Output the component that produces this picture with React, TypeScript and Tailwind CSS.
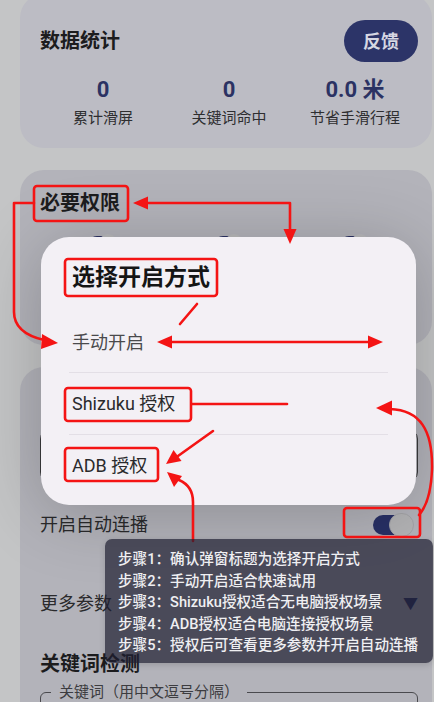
import React from "react";

const RED = "#f41414";

function Annotations() {
  return (
    <svg
      className="absolute inset-0 pointer-events-none"
      width={434}
      height={702}
      viewBox="0 0 434 702"
      fill="none"
    >
      <g stroke={RED} strokeWidth={2.6} strokeLinecap="round" strokeLinejoin="round">
        <rect x={34} y={186} width={94} height={35} rx={3} />
        <rect x={65} y={259} width={152} height={37} rx={3} />
        <rect x={65} y={388} width={126} height={33} rx={3} />
        <rect x={65} y={448} width={93} height={33} rx={3} />
        <rect x={344} y={508} width={76} height={29} rx={3} />
        <path d="M145 203 H290 V231" />
        <path d="M34 203 H14 V312 Q14 333 44 340" />
        <path d="M197 304 L180 324" />
        <path d="M170 342 H370" />
        <path d="M192 404 H287" />
        <path d="M213 431 L178 456" />
        <path d="M193 541 V502 Q193 486 179 480" />
        <path d="M390 409 C420 410 433 430 432 470 C431 495 426 507 419 515" />
      </g>
      <g fill={RED}>
        <polygon points="133,203 148,196.5 148,209.5" />
        <polygon points="290,244 283.5,229 296.5,229" />
        <polygon points="58,343 42,334 41,349" />
        <polygon points="157,342 172,335.5 172,348.5" />
        <polygon points="383,342 368,335.5 368,348.5" />
        <polygon points="166,464 181.5,461 173.5,450" />
        <polygon points="167,472 182,476 174,487" />
        <polygon points="376,408 392,400.5 392,415.5" />
      </g>
    </svg>
  );
}

function SmallToggle() {
  return (
    <div className="relative w-[28px] h-[16px]">
      <div className="absolute inset-0 rounded-full bg-[#2b3163]" />
      <div className="absolute right-0 top-[-2px] w-[18px] h-[18px] rounded-full bg-[#b9b9bb]" />
    </div>
  );
}

export default function App() {
  return (
    <div className="relative w-[434px] h-[702px] overflow-hidden bg-[#c4c5c6] font-['Roboto','Noto_Sans_CJK_SC',sans-serif]">
      <div className="flex flex-col gap-[22px] pl-5 pr-[2px] mt-[-6px]">
        {/* Card 1 */}
        <div className="rounded-[24px] bg-[#bcbcc4] pl-5 pr-[14px] pt-[26px] pb-[20px]">
          <div className="flex items-center justify-between h-[42px]">
            <span className="text-[20px] font-bold leading-[28px] text-[#1c1c1e]">数据统计</span>
            <span className="flex items-center justify-center w-[74px] h-[42px] rounded-full bg-[#2c3468] text-[18px] font-bold text-[#d6d7e3]">
              反馈
            </span>
          </div>
          <div className="grid grid-cols-3 mt-[15px]">
            {[
              ["0", "累计滑屏"],
              ["0", "关键词命中"],
              ["0.0 米", "节省手滑行程"],
            ].map(([n, l]) => (
              <div key={l} className="flex flex-col items-center">
                <span className="text-[22px] font-bold leading-[26px] text-[#2b3263]">{n}</span>
                <span className="mt-[5px] text-[15px] leading-[20px] text-[#2e2e30]">{l}</span>
              </div>
            ))}
          </div>
        </div>

        {/* Card 2 */}
        <div className="h-[175px] rounded-[24px] bg-[#b3b3ba] pl-5 pr-[14px] pt-[20px]">
          <div className="text-[20px] font-bold leading-[26px] text-[#1c1c1e]">必要权限</div>
          <div className="grid grid-cols-3 mt-[20px] justify-items-center">
            <SmallToggle />
            <SmallToggle />
            <SmallToggle />
          </div>
        </div>

        {/* Card 3 */}
        <div className="rounded-[24px] bg-[#b3b3ba] pl-5 pr-[14px] pt-[62px] pb-10">
          <div className="h-[53px] rounded-[10px] border border-[#3a3a3c]" />
          <div className="mt-[29px] flex items-center justify-between h-[28px]">
            <span className="text-[18px] leading-[28px] text-[#2a2a2c]">开启自动连播</span>
            <div className="relative w-[41px] h-[24px] mr-[4px]">
              <div className="absolute left-0 top-[2px] w-[38px] h-[20px] rounded-full bg-[#283066]" />
              <div className="absolute right-0 top-0 w-[25px] h-[24px] rounded-full bg-[#b4b4b6] border border-[#a4a4a8]" />
            </div>
          </div>
          <div className="mt-[51px] flex items-center justify-between h-[28px]">
            <span className="text-[18px] leading-[28px] text-[#2a2a2c]">更多参数</span>
            <span className="text-[15px] leading-none text-[#2b3163]">▼</span>
          </div>
          <div className="mt-[32px] text-[20px] font-bold leading-[28px] text-[#1c1c1e]">关键词检测</div>
          <fieldset className="mt-[4px] h-[60px] rounded-[6px] border border-[#4a4a4e] pl-[10px]">
            <legend className="px-[8px] text-[15px] leading-[20px] text-[#3c3c40]">关键词（用中文逗号分隔）</legend>
          </fieldset>
        </div>
      </div>

      {/* Dialog */}
      <div className="absolute left-[41px] top-[237px] w-[375px] h-[268px] rounded-[28px] bg-[#f3f0f5] shadow-[0_8px_70px_rgba(0,0,0,0.22)] pt-[25px]">
        <div className="pl-[31px] text-[23px] font-bold leading-[32px] text-[#151515]">选择开启方式</div>
        <div className="mt-[18px] mx-[28px]">
          <div className="h-[61px] flex items-center pl-[3px] border-b border-[#e3dfe6] text-[18px] text-[#4a4a4c]">
            手动开启
          </div>
          <div className="h-[62px] flex items-center pl-[3px] border-b border-[#e3dfe6] text-[18px] text-[#2a2a2c]">
            Shizuku 授权
          </div>
          <div className="h-[61px] flex items-center pl-[3px] text-[18px] text-[#2a2a2c]">ADB 授权</div>
        </div>
      </div>

      <Annotations />

      {/* Tooltip */}
      <div className="absolute left-[105px] top-[539px] w-[328px] h-[124px] rounded-[7px] bg-[rgba(30,30,48,0.7)] shadow-[0_2px_6px_rgba(0,0,0,0.15)] pl-[13px] pt-[10px]">
        {[
          "步骤1：确认弹窗标题为选择开启方式",
          "步骤2：手动开启适合快速试用",
          "步骤3：Shizuku授权适合无电脑授权场景",
          "步骤4：ADB授权适合电脑连接授权场景",
          "步骤5：授权后可查看更多参数并开启自动连播",
        ].map((t) => (
          <div key={t} className="text-[14.6px] leading-[21.5px] font-medium text-[#efeff2] whitespace-nowrap">
            {t}
          </div>
        ))}
      </div>
    </div>
  );
}
